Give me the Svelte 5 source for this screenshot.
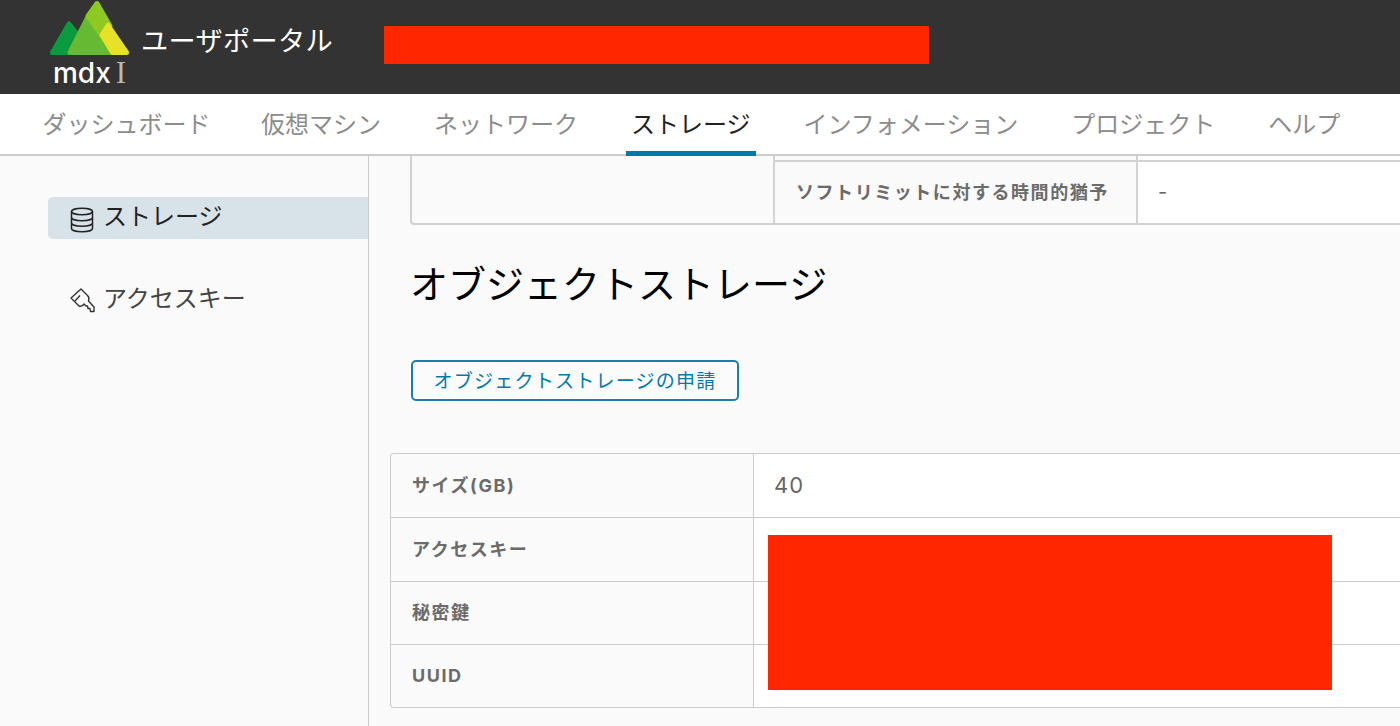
<script>
  let navItems = ['ダッシュボード', '仮想マシン', 'ネットワーク', 'ストレージ', 'インフォメーション', 'プロジェクト', 'ヘルプ'];
  let activeNav = 'ストレージ';

  let storageRows = [
    { label: 'サイズ(GB)', value: '40' },
    { label: 'アクセスキー', value: '' },
    { label: '秘密鍵', value: '' },
    { label: 'UUID', value: '' }
  ];
</script>

<div class="page">
  <header class="topbar">
    <div class="logo">
      <svg class="logo_mark" viewBox="0 0 80 56" width="80" height="56" stroke-linejoin="round" aria-hidden="true">
        <path d="M19 24 L2.5 52.5 H32 V40 Z" fill="#0a9a3f" stroke="#0a9a3f" stroke-width="5"/>
        <path d="M38 17 L20 52.5 H60 Z" fill="#66b932" stroke="#66b932" stroke-width="5"/>
        <path d="M47 3.5 L38 16 L52 36 L60 26 Z" fill="#8dc823" stroke="#8dc823" stroke-width="5"/>
        <path d="M58 25.5 L52 35 L62.5 52.5 H76.5 Z" fill="#e7e229" stroke="#e7e229" stroke-width="5"/>
      </svg>
      <div class="logo_text"><span class="mdx">mdx</span><span class="roman">I</span></div>
    </div>
    <div class="portal_name">ユーザポータル</div>
    <div class="redacted_head"></div>
  </header>

  <nav class="tabs">
    {#each navItems as item}
      <div class="tab" class:active={item === activeNav}>{item}</div>
    {/each}
  </nav>

  <div class="body">
    <aside class="side">
      <div class="side_item selected">
        <svg viewBox="0 0 24 26" width="24" height="26" fill="none" stroke="#222" stroke-width="1.5" aria-hidden="true">
          <ellipse cx="12" cy="4.5" rx="10.5" ry="3.2"/>
          <path d="M1.5 4.5 V21.5 C1.5 23.3 6 24.8 12 24.8 S22.5 23.3 22.5 21.5 V4.5"/>
          <path d="M1.5 10.5 C1.5 12.3 6 13.8 12 13.8 S22.5 12.3 22.5 10.5"/>
          <path d="M1.5 16 C1.5 17.8 6 19.3 12 19.3 S22.5 17.8 22.5 16"/>
        </svg>
        <span>ストレージ</span>
      </div>
      <div class="side_item">
        <svg viewBox="0 0 25 25" width="25" height="25" fill="none" stroke="#333" stroke-width="1.4" stroke-linejoin="round" aria-hidden="true">
          <path d="M11 1 L1 10 L9 18 C11 18.5 13 17.5 14 16 L16 18 L17.5 18 L18 20.5 L20 20.5 L20.5 23.5 L24 23.5 L24 19 L18.5 13 C19.5 10.5 19 9 17.5 7.5 Z"/>
          <path d="M5 13 L10 7.5"/>
        </svg>
        <span>アクセスキー</span>
      </div>
    </aside>

    <main class="content">
      <div class="quota">
        <div class="quota_blank"></div>
        <div class="quota_stub"></div>
        <div class="quota_stub_value"></div>
        <div class="quota_label">ソフトリミットに対する時間的猶予</div>
        <div class="quota_value">-</div>
      </div>

      <h2 class="section_title">オブジェクトストレージ</h2>

      <button class="apply_btn">オブジェクトストレージの申請</button>

      <div class="detail">
        {#each storageRows as row}
          <div class="detail_row">
            <div class="detail_label">{row.label}</div>
            <div class="detail_value">{row.value}</div>
          </div>
        {/each}
        <div class="redacted_keys"></div>
      </div>
    </main>
  </div>
</div>

<style>
  :global(body) {
    margin: 0;
    background: #fafafa;
    overflow: hidden;
  }

  .page {
    width: 1400px;
    height: 726px;
    overflow: hidden;
    font-family: "Noto Sans CJK JP", sans-serif;
  }

  /* Header */
  .topbar {
    height: 94px;
    background: #333;
    display: flex;
    align-items: flex-start;
    padding-left: 50px;
    box-sizing: border-box;
  }

  .logo {
    width: 80px;
    display: flex;
    flex-direction: column;
  }

  .logo_mark {
    display: block;
  }

  .logo_text {
    display: flex;
    align-items: baseline;
    height: 30px;
    margin-top: 2px;
    padding-left: 3px;
    color: #fff;
    line-height: 30px;
  }

  .mdx {
    font-family: Inter, sans-serif;
    font-size: 28px;
    font-weight: 500;
  }

  .roman {
    font-family: "Liberation Serif", serif;
    font-size: 31px;
    color: #b9b9b9;
    margin-left: 5px;
  }

  .portal_name {
    color: #fff;
    font-size: 27.2px;
    letter-spacing: 0.3px;
    line-height: 40px;
    margin: 19px 0 0 11px;
    white-space: nowrap;
  }

  .redacted_head {
    width: 545px;
    height: 38px;
    background: #ff2600;
    margin: 26px 0 0 51px;
  }

  /* Tabs */
  .tabs {
    height: 62px;
    box-sizing: border-box;
    background: #fff;
    border-bottom: 2px solid #ccc;
    display: flex;
    gap: 42px;
    padding-left: 37px;
  }

  .tab {
    padding: 0 5.5px;
    height: 62px;
    box-sizing: border-box;
    font-size: 24px;
    line-height: 58px;
    color: #8c8c8c;
    white-space: nowrap;
  }

  .tab:first-child {
    margin-right: -2.5px;
  }

  .tab.active {
    color: #222;
    border-bottom: 5px solid #0079ad;
  }

  /* Sidebar */
  .body {
    display: flex;
    height: 570px;
  }

  .side {
    width: 369px;
    box-sizing: border-box;
    border-right: 1px solid #ccc;
    padding: 41px 0 0 48px;
    display: flex;
    flex-direction: column;
    gap: 39px;
    flex-shrink: 0;
  }

  .side_item {
    height: 42px;
    display: flex;
    align-items: center;
    gap: 8px;
    padding-left: 22px;
    font-size: 24px;
    color: #444;
    border-radius: 5px 0 0 5px;
  }

  .side_item span {
    line-height: 36px;
    margin-top: -4px;
  }

  .side_item svg {
    flex-shrink: 0;
    margin-top: 3px;
  }

  .side_item.selected {
    background: #d8e3e9;
    color: #222;
  }

  .side_item.selected span {
    margin-top: -6px;
  }

  .side_item.selected svg {
    margin-top: 0;
    margin-right: 1px;
    transform: translateY(2px);
  }

  /* Content */
  .content {
    flex: 1;
    min-width: 0;
    padding-left: 42px;
  }

  .quota {
    display: grid;
    grid-template-columns: 363px 363px 1fr;
    grid-template-rows: 4px 63px;
    border-left: 2px solid #d2d2d2;
    border-bottom: 2px solid #d2d2d2;
    border-bottom-left-radius: 4px;
    margin-left: -1px;
  }

  .quota_blank {
    grid-row: 1 / 3;
    border-right: 2px solid #d2d2d2;
  }

  .quota_stub {
    border-right: 2px solid #d2d2d2;
  }

  .quota_stub_value {
    background: #fff;
  }

  .quota_label,
  .detail_label {
    font-family: Inter, "Noto Sans CJK JP", sans-serif;
    font-size: 18px;
    font-weight: 700;
    letter-spacing: 1.55px;
    color: #6b6b6b;
  }

  .quota_label {
    border-top: 2px solid #d2d2d2;
    border-right: 2px solid #d2d2d2;
    padding: 16px 0 0 21px;
    white-space: nowrap;
    line-height: 30px;
  }

  .quota_value {
    background: #fff;
    border-top: 2px solid #d2d2d2;
    padding: 15px 0 0 20px;
    font-family: Inter, sans-serif;
    font-size: 20px;
    line-height: 30px;
    color: #666;
  }

  .section_title {
    margin: 0 0 0 -1px;
    padding-top: 32px;
    height: 127px;
    box-sizing: border-box;
    font-size: 38px;
    font-weight: 400;
    line-height: 50px;
    color: #000;
    white-space: nowrap;
  }

  .apply_btn {
    display: block;
    width: 328px;
    height: 41px;
    box-sizing: border-box;
    border: 2px solid #1a7fae;
    border-radius: 5px;
    background: #fbfbfb;
    color: #0079ad;
    font-family: inherit;
    font-size: 19px;
    letter-spacing: 1.25px;
    line-height: 1;
    padding: 0 0 2px;
    margin: 8px 0 0 0;
  }

  .detail {
    position: relative;
    margin: 52px 0 0 -21px;
    border: 1px solid #ccc;
    border-right: none;
    border-radius: 4px 0 0 4px;
  }

  .detail_row {
    display: flex;
    height: 63.5px;
    border-top: 1px solid #ccc;
    box-sizing: border-box;
  }

  .detail_row:first-child {
    height: 63px;
    border-top: none;
  }

  .detail_row:last-child,
  .detail_row:nth-child(4) {
    height: 63px;
  }

  .detail_label {
    width: 363px;
    box-sizing: border-box;
    border-right: 1px solid #ccc;
    padding: 0 0 3px 21px;
    display: flex;
    align-items: center;
  }

  .detail_row:nth-child(4) .detail_label {
    padding-bottom: 1px;
  }

  .detail_value {
    flex: 1;
    background: #fff;
    padding: 0 0 2px 20px;
    display: flex;
    align-items: center;
    font-family: Inter, sans-serif;
    font-size: 22px;
    letter-spacing: 1px;
    color: #666;
  }

  .redacted_keys {
    position: absolute;
    left: 377px;
    top: 81px;
    width: 564px;
    height: 155px;
    background: #ff2600;
  }
</style>
